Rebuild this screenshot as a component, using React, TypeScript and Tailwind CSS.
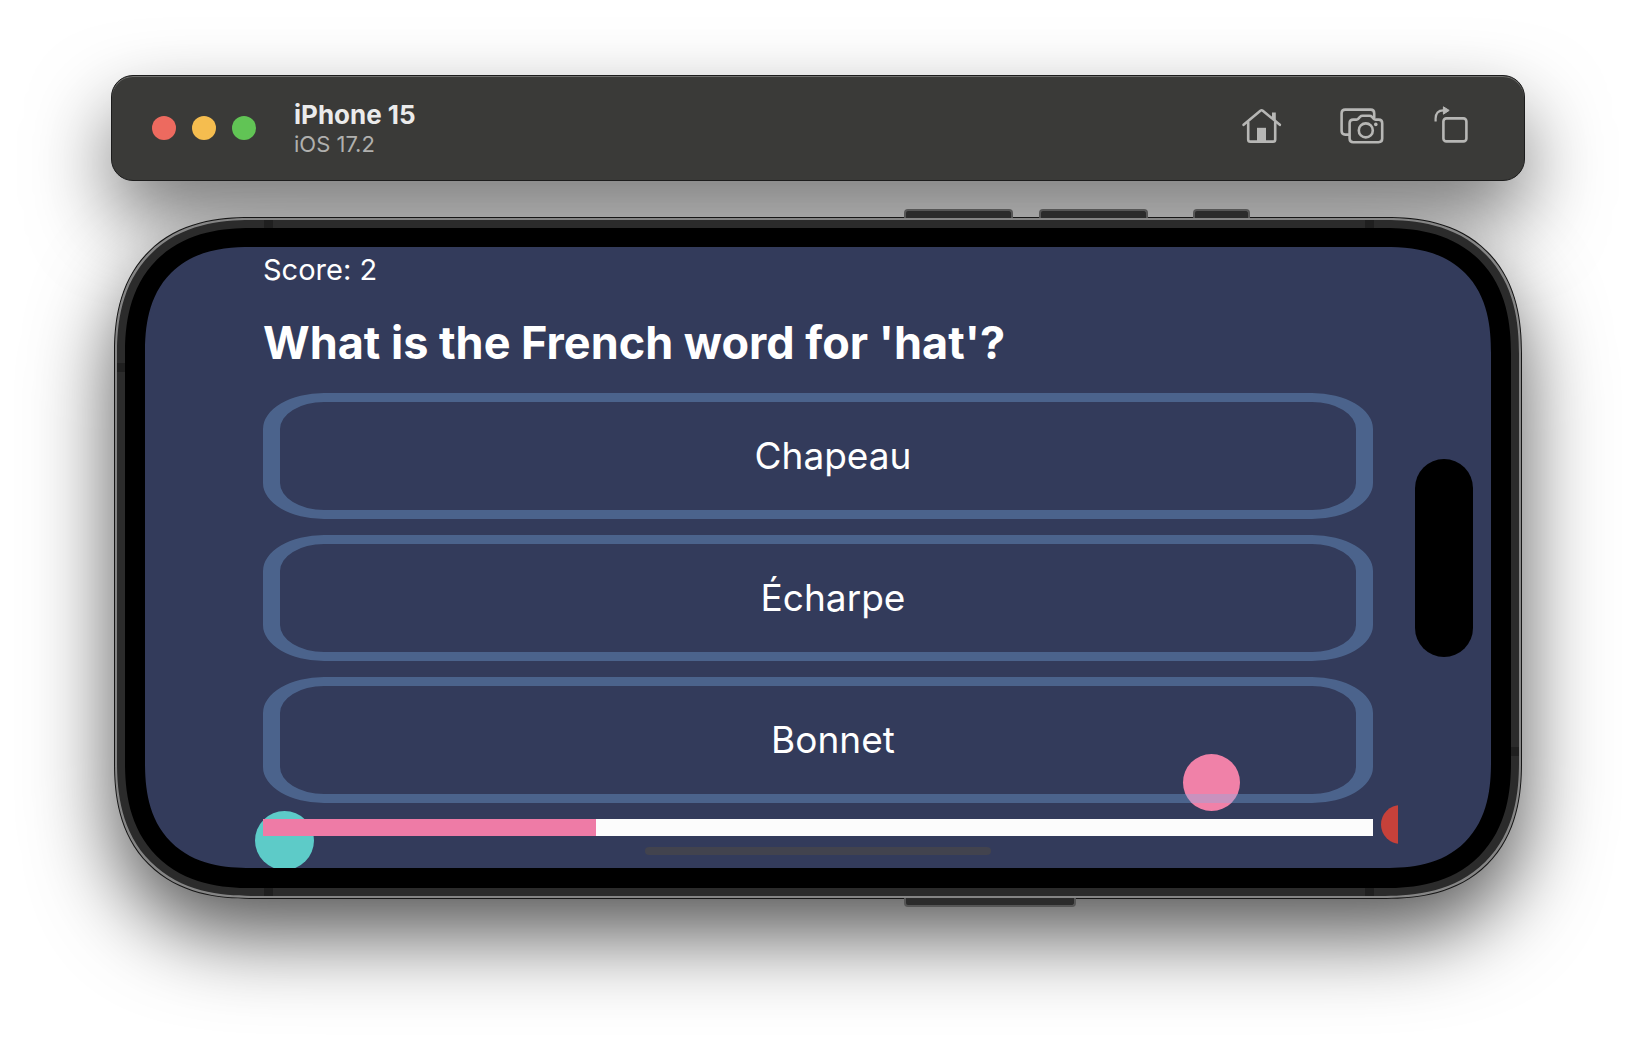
const options = ["Chapeau", "Écharpe", "Bonnet"];

function HomeIcon() {
  return (
    <svg width="40" height="36" viewBox="0 0 40 36" fill="none" stroke="#b7b7b5" strokeWidth="2.6" strokeLinecap="round" strokeLinejoin="round">
      <path d="M1.6 16.8 L18.4 2.7 Q19.6 1.8 20.8 2.7 L37.8 16.8" />
      <path d="M6.2 14.5 V31.4 Q6.2 33.6 8.4 33.6 H31 Q33.2 33.6 33.2 31.4 V14.5" />
      <path d="M15 34 V19.8 H24 V34 Z" fill="#b7b7b5" stroke="none" />
      <path d="M30 4.5 H33.8 V13.5 L30 10.3 Z" fill="#b7b7b5" stroke="none" />
    </svg>
  );
}

function CameraIcon() {
  return (
    <svg width="44" height="36" viewBox="0 0 44 36" fill="none" stroke="#b7b7b5" strokeWidth="2.6" strokeLinecap="butt" strokeLinejoin="round">
      <path d="M9.6 26.6 H5.2 Q1.6 26.6 1.6 23 V5.2 Q1.6 1.6 5.2 1.6 H30.6 Q34.2 1.6 34.2 5.2 V10" />
      <path d="M13.2 11.6 H16.4 Q17.6 11.6 18.4 10.6 L20 8.8 Q21 7.8 22.6 7.8 H29.4 Q31 7.8 32 8.8 L33.6 10.6 Q34.4 11.6 35.6 11.6 H38.6 Q42.2 11.6 42.2 15.2 V30.6 Q42.2 34.2 38.6 34.2 H13.2 Q9.6 34.2 9.6 30.6 V15.2 Q9.6 11.6 13.2 11.6 Z" />
      <circle cx="25.8" cy="22.4" r="7" />
      <circle cx="35.8" cy="16.4" r="1.8" fill="#b7b7b5" stroke="none" />
    </svg>
  );
}

function RotateIcon() {
  return (
    <svg width="34" height="37" viewBox="0 0 34 37" fill="none" stroke="#b7b7b5" strokeWidth="2.6">
      <rect x="9.4" y="12.4" width="23" height="23" rx="3" />
      <path d="M1.6 15.4 V12.6 Q1.6 4.4 9.4 4.4 H10" strokeWidth="2.2" />
      <path d="M9.4 0.8 L15.2 4.4 L9.4 8.2 Z" fill="#b7b7b5" strokeWidth="1" strokeLinejoin="round" />
    </svg>
  );
}

const sideKey = "h-[9px] border-2 border-[#555555] bg-[#2b2b2b]";
const band = "bg-[#1f1f1f]";

export default function App() {
  return (
    <main className="relative isolate min-h-screen overflow-hidden bg-white px-[111px] pt-[75px] pb-[165px] font-['Inter',sans-serif]">
      <header className="relative flex h-[106px] items-center rounded-[22px] border border-[#1c1c1c] bg-[#3a3a38] pr-14 pl-10 shadow-[inset_0_1px_0_#70706e] before:absolute before:inset-0 before:-z-10 before:rounded-[22px] before:shadow-[0_36px_80px_rgba(0,0,0,0.55)]">
        <div className="flex gap-4">
          <button aria-label="Close" className="size-6 rounded-full bg-[#ed6a5f]" />
          <button aria-label="Minimize" className="size-6 rounded-full bg-[#f5bd4f]" />
          <button aria-label="Zoom" className="size-6 rounded-full bg-[#61c455]" />
        </div>
        <div className="ml-[38px] flex-1 pt-0.5">
          <h1 className="text-[26px] leading-[30px] font-bold text-[#ebebeb]">iPhone 15</h1>
          <p className="text-[22px] leading-7 text-[#b0b0ae]">iOS 17.2</p>
        </div>
        <div className="flex items-center pb-1">
          <button aria-label="Home"><HomeIcon /></button>
          <button aria-label="Screenshot" className="ml-[58px]"><CameraIcon /></button>
          <button aria-label="Rotate" className="ml-[50px] pb-1"><RotateIcon /></button>
        </div>
      </header>

      <section className="relative mx-[3px] mt-9 rounded-[136px] border border-[#161616] bg-[#858585] p-[2px] [corner-shape:superellipse(1.25)] before:absolute before:inset-0 before:-z-10 before:rounded-[136px] before:shadow-[0_36px_84px_rgba(0,0,0,0.68)] before:[corner-shape:superellipse(1.25)]">
        <div className="absolute inset-x-0 bottom-full flex pl-[789px]">
          <span className={`${sideKey} w-[109px] rounded-t border-b-0`} />
          <span className={`${sideKey} ml-[26px] w-[109px] rounded-t border-b-0`} />
          <span className={`${sideKey} ml-[45px] w-[57px] rounded-t border-b-0`} />
        </div>
        <div className="absolute inset-x-0 top-full flex pl-[789px]">
          <span className={`${sideKey} w-[172px] rounded-b border-t-0`} />
        </div>
        <div className="relative rounded-[134px] bg-[#2b2b2b] p-2 [corner-shape:superellipse(1.25)]">
          <div className="absolute inset-0 flex flex-col justify-between">
            <div className="flex justify-between pr-[145px] pl-[147px]">
              <span className={`${band} h-2 w-[9px]`} />
              <span className={`${band} h-2 w-[9px]`} />
            </div>
            <div className="flex flex-1 items-stretch justify-between pt-[135px] pb-[132px]">
              <span className={`${band} h-[9px] w-2 self-start`} />
              <span className={`${band} h-[9px] w-2 self-end`} />
            </div>
            <div className="flex justify-between pr-[145px] pl-[147px]">
              <span className={`${band} h-2 w-[9px]`} />
              <span className={`${band} h-2 w-[9px]`} />
            </div>
          </div>
          <div className="relative rounded-[126px] bg-black px-5 pt-[19px] pb-5 [corner-shape:superellipse(1.25)]">
            <div className="relative overflow-hidden rounded-[106px] bg-[#333b5b] px-[118px] pt-1 pb-8 text-white [corner-shape:superellipse(1.3)]">
              <div className="pointer-events-none absolute inset-y-0 right-[93px] left-0 overflow-hidden">
                <span className="absolute bottom-[57px] left-[1038px] size-[57px] rounded-full bg-[#f081a8]" />
                <span className="absolute -bottom-[2px] left-[110px] size-[59px] rounded-full bg-[#5dcbc8]" />
                <span className="absolute -right-[22px] bottom-[24px] size-[39px] rounded-full bg-[#c6413a]" />
              </div>
              <div className="relative">
                <p className="text-[29px] leading-[38px]">Score: 2</p>
                <h2 className="mt-[26px] text-[45px] leading-[56px] font-bold">What is the French word for 'hat'?</h2>
                <div className="mt-[22px] flex flex-col gap-4">
                  {options.map((o) => (
                    <button key={o} className="h-[126px] rounded-[61px/36px] border-x-[17px] border-y-[9px] border-[rgba(124,179,235,0.34)] pl-[30px] text-[37px]">
                      {o}
                    </button>
                  ))}
                </div>
                <div role="progressbar" aria-label="Quiz progress" aria-valuenow={30} aria-valuemin={0} aria-valuemax={100} className="mt-4 h-[17px] bg-[#fcfcfc]">
                  <div className="h-full w-[30%] bg-[#ee7ba6]" />
                </div>
              </div>
              <div className="absolute inset-x-0 bottom-0 flex justify-center pb-[13px]">
                <span className="h-2 w-[346px] rounded-full bg-[#42434e]" />
              </div>
              <div className="absolute inset-y-0 right-0 flex items-center pr-[18px]">
                <span className="h-[198px] w-[58px] rounded-full bg-black" />
              </div>
            </div>
          </div>
        </div>
      </section>
    </main>
  );
}
